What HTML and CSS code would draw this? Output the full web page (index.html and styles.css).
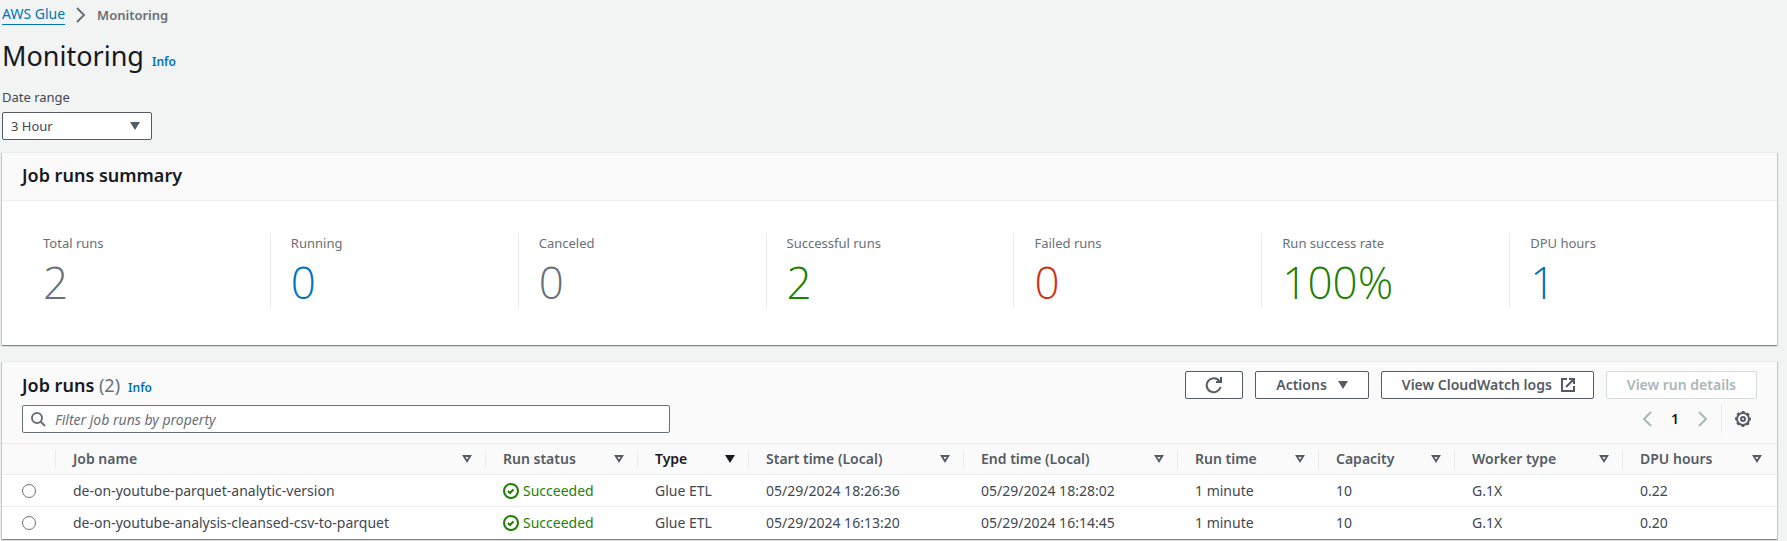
FILE: index.html
```html
<!DOCTYPE html>
<html lang="en">
<head>
<meta charset="utf-8">
<title>Monitoring - AWS Glue</title>
<link rel="stylesheet" href="styles.css">
</head>
<body>
<svg class="sprite" aria-hidden="true">
  <symbol id="sort" viewBox="0 0 16 16"><path d="M4.700 5h6.600L8 10.200z" fill="none" stroke="currentColor" stroke-width="1.800"/></symbol>
  <symbol id="caret" viewBox="0 0 16 16"><path d="M4.700 5h6.600L8 10.200z" fill="currentColor" stroke="currentColor" stroke-width="1.800"/></symbol>
  <symbol id="success" viewBox="0 0 16 16"><circle cx="8" cy="8" r="7" fill="none" stroke="currentColor" stroke-width="2"/><path d="M5 8l2 2 3.500-3.500" fill="none" stroke="currentColor" stroke-width="2"/></symbol>
  <symbol id="chevron" viewBox="0 0 16 16"><path d="M4 1l7 7-7 7" fill="none" stroke="currentColor" stroke-width="2"/></symbol>
</svg>
<main class="page">
  <nav class="breadcrumb" aria-label="Breadcrumb">
    <a class="crumb-link" href="#glue">AWS Glue</a>
    <svg class="icon"><use href="#chevron"/></svg>
    <span class="crumb-current">Monitoring</span>
  </nav>
  <header class="title-row">
    <h1 class="title">Monitoring</h1>
    <a class="info" href="#info">Info</a>
  </header>
  <div class="field">
    <label class="field-label" for="range">Date range</label>
    <div class="select-wrap">
      <select class="select" id="range"><option>3 Hour</option></select>
      <svg class="icon select-caret"><use href="#caret"/></svg>
    </div>
  </div>

  <section class="panel summary">
    <header class="summary-head"><h2 class="heading">Job runs summary</h2></header>
    <dl class="stats">
      <div class="stat"><dt>Total runs</dt><dd>2</dd></div>
      <div class="stat"><dt>Running</dt><dd class="blue">0</dd></div>
      <div class="stat"><dt>Canceled</dt><dd>0</dd></div>
      <div class="stat"><dt>Successful runs</dt><dd class="green">2</dd></div>
      <div class="stat"><dt>Failed runs</dt><dd class="red">0</dd></div>
      <div class="stat"><dt>Run success rate</dt><dd class="green">100%</dd></div>
      <div class="stat"><dt>DPU hours</dt><dd class="blue">1</dd></div>
    </dl>
  </section>

  <section class="panel">
    <header class="runs-head">
      <div class="bar">
        <div class="runs-title">
          <h2 class="heading">Job runs <span class="count">(2)</span></h2>
          <a class="info" href="#runs-info">Info</a>
        </div>
        <div class="actions">
          <button class="btn" type="button" aria-label="Refresh"><svg class="icon" viewBox="0 0 16 16"><path d="M14.500 10A7 7 0 1 1 13.500 4.300M15 0v5H10" fill="none" stroke="currentColor" stroke-width="2"/></svg></button>
          <button class="btn btn-trailing" type="button">Actions <svg class="icon"><use href="#caret"/></svg></button>
          <button class="btn btn-trailing" type="button">View CloudWatch logs <svg class="icon" viewBox="0 0 16 16"><path d="M7 2H2v12h12V9M9 2h5v5M14 2L6 10" fill="none" stroke="currentColor" stroke-width="2"/></svg></button>
          <button class="btn" type="button" disabled>View run details</button>
        </div>
      </div>
      <div class="bar">
        <div class="search">
          <svg class="icon search-icon" viewBox="0 0 16 16"><circle cx="7" cy="7" r="5" fill="none" stroke="currentColor" stroke-width="2"/><path d="M10.500 10.500L15 15" stroke="currentColor" stroke-width="2"/></svg>
          <input class="search-input" type="text" placeholder="Filter job runs by property" aria-label="Filter job runs">
        </div>
        <div class="pager">
          <button class="icon-btn" type="button" disabled aria-label="Previous page"><svg class="icon flip"><use href="#chevron"/></svg></button>
          <button class="icon-btn page-no" type="button">1</button>
          <button class="icon-btn" type="button" disabled aria-label="Next page"><svg class="icon"><use href="#chevron"/></svg></button>
          <span class="rule"></span>
          <button class="icon-btn" type="button" aria-label="Preferences"><svg class="icon" viewBox="0 0 16 16" fill="none" stroke="currentColor" stroke-width="2"><circle cx="8" cy="8" r="6"/><circle cx="8" cy="8" r="7" stroke-dasharray="2.750 2.748" stroke-dashoffset="1.370"/><circle cx="8" cy="8" r="2"/></svg></button>
        </div>
      </div>
    </header>
    <table class="table">
      <colgroup><col class="c-pick"><col><col class="c-status"><col class="c-type"><col class="c-start"><col class="c-end"><col class="c-time"><col class="c-cap"><col class="c-worker"><col class="c-dpu"></colgroup>
      <thead>
        <tr>
          <th aria-label="Select"><div class="th"></div></th>
          <th><div class="th">Job name<svg class="icon"><use href="#sort"/></svg></div></th>
          <th><div class="th">Run status<svg class="icon"><use href="#sort"/></svg></div></th>
          <th><div class="th sorted">Type<svg class="icon"><use href="#caret"/></svg></div></th>
          <th><div class="th">Start time (Local)<svg class="icon"><use href="#sort"/></svg></div></th>
          <th><div class="th">End time (Local)<svg class="icon"><use href="#sort"/></svg></div></th>
          <th><div class="th">Run time<svg class="icon"><use href="#sort"/></svg></div></th>
          <th><div class="th">Capacity<svg class="icon"><use href="#sort"/></svg></div></th>
          <th><div class="th">Worker type<svg class="icon"><use href="#sort"/></svg></div></th>
          <th><div class="th">DPU hours<svg class="icon"><use href="#sort"/></svg></div></th>
        </tr>
      </thead>
      <tbody>
        <tr>
          <td class="pick"><input class="radio" type="radio" name="run" aria-label="Select de-on-youtube-parquet-analytic-version"></td>
          <td>de-on-youtube-parquet-analytic-version</td>
          <td><span class="status"><svg class="icon"><use href="#success"/></svg>Succeeded</span></td>
          <td>Glue ETL</td><td>05/29/2024 18:26:36</td><td>05/29/2024 18:28:02</td><td>1 minute</td><td>10</td><td>G.1X</td><td>0.22</td>
        </tr>
        <tr>
          <td class="pick"><input class="radio" type="radio" name="run" aria-label="Select de-on-youtube-analysis-cleansed-csv-to-parquet"></td>
          <td>de-on-youtube-analysis-cleansed-csv-to-parquet</td>
          <td><span class="status"><svg class="icon"><use href="#success"/></svg>Succeeded</span></td>
          <td>Glue ETL</td><td>05/29/2024 16:13:20</td><td>05/29/2024 16:14:45</td><td>1 minute</td><td>10</td><td>G.1X</td><td>0.20</td>
        </tr>
      </tbody>
    </table>
  </section>
</main>
</body>
</html>
```
FILE: styles.css
```css
* { box-sizing: border-box; }
body {
  margin: 0;
  background: #f2f3f3;
  color: #414750;
  font-family: "Noto Sans", "Open Sans", sans-serif;
  font-size: 14px;
  line-height: 20px;
}
button, input, select { font: inherit; color: inherit; }
h1, h2, dl, dd { margin: 0; font-weight: 400; }
.sprite { display: none; }
.icon { display: block; flex: none; width: 16px; height: 16px; overflow: visible; }
.page { padding: 4px 10px 2px 2px; }

.breadcrumb { display: flex; align-items: center; gap: 8px; color: #687078; }
.crumb-link { color: #0073bb; text-decoration: none; border-bottom: 1px solid #0073bb; }
.crumb-current { font-size: 13px; font-weight: 600; }

.title-row { display: flex; align-items: baseline; gap: 8px; margin-top: 13px; }
.title { color: #16191f; font-size: 27px; line-height: 36px; }
.info { color: #0073bb; font-size: 12px; font-weight: 600; text-decoration: none; }
.field { margin-top: 13px; font-size: 13px; }
.field-label { display: block; margin-bottom: 5px; }
.select-wrap { position: relative; width: 150px; }
.select {
  appearance: none;
  display: block;
  width: 100%;
  height: 28px;
  padding: 0 8px;
  border: 1px solid #545b64;
  border-radius: 2px;
  background: #fff;
}
.select-caret { position: absolute; right: 9px; top: 6px; color: #545b64; pointer-events: none; }

.panel {
  background: #fff;
  border-top: 1px solid #eaeded;
  box-shadow: 0 1px 1px 0 rgba(0, 28, 36, .3), 1px 1px 1px 0 rgba(0, 28, 36, .15), -1px 1px 1px 0 rgba(0, 28, 36, .15);
}
.summary { margin: 12px 0 16px; }
.summary-head { padding: 10px 20px 13px; background: #fafafa; border-bottom: 1px solid #eaeded; }
.heading { color: #16191f; font-size: 18px; font-weight: 600; line-height: 24px; }
.count { color: #687078; font-weight: 400; }
.stats { display: grid; grid-template-columns: repeat(7, 1fr); padding: 32px 20px 36px; color: #687078; font-size: 13px; }
.stat { padding: 0 20px; border-left: 1px solid #eaeded; }
.stat:first-child { border-color: transparent; }
.stat dd { padding-top: 2px; font-family: "Open Sans", "Noto Sans", sans-serif; font-size: 44px; font-weight: 300; line-height: 54px; }
.stat .blue { color: #0073bb; }
.stat .green { color: #1d8102; }
.stat .red { color: #d13212; }

.runs-head { display: grid; gap: 6px; padding: 9px 20px 10px; background: #fafafa; border-bottom: 1px solid #eaeded; }
.bar { display: flex; align-items: center; justify-content: space-between; }
.runs-title { display: flex; align-items: baseline; gap: 8px; }
.actions { display: flex; gap: 12px; }
.btn {
  display: flex;
  align-items: center;
  gap: 8px;
  height: 28px;
  padding: 0 20px;
  border: 1px solid #545b64;
  border-radius: 2px;
  background: #fff;
  color: #545b64;
  font-weight: 600;
}
.btn-trailing { padding-right: 17px; }
.btn:disabled { border-color: #d5dbdb; color: #aab7b8; }
.search { position: relative; width: 648px; }
.search-icon { position: absolute; left: 8px; top: 6px; color: #687078; }
.search-input { display: block; width: 100%; height: 28px; padding: 0 8px 0 32px; border: 1px solid #687078; border-radius: 2px; background: #fff; }
.search-input::placeholder { color: #687078; font-style: italic; opacity: 1; }
.pager { display: flex; align-items: center; }
.icon-btn { display: flex; align-items: center; justify-content: center; width: 28px; height: 28px; padding: 0; border: 0; background: none; color: #545b64; }
.icon-btn:disabled { color: #aab7b8; }
.page-no { color: #16191f; font-weight: 600; }
.flip { transform: scaleX(-1); }
.rule { width: 1px; height: 28px; margin: 0 7px 0 4px; background: #eaeded; }

.table { width: 100%; table-layout: fixed; border-collapse: separate; border-spacing: 0; }
.c-pick { width: 54px; }
.c-status { width: 152px; }
.c-type { width: 111px; }
.c-start { width: 215px; }
.c-end { width: 214px; }
.c-time { width: 141px; }
.c-cap { width: 136px; }
.c-worker { width: 168px; }
.c-dpu { width: 154px; }
th { height: 31px; padding: 0; background: #fafafa; border-bottom: 1px solid #eaeded; color: #545b64; font-weight: 600; text-align: left; }
.th { display: flex; align-items: center; justify-content: space-between; height: 20px; padding: 0 10px 0 17px; border-right: 1px solid #eaeded; white-space: nowrap; }
th:last-child .th { border-right: 0; padding-right: 12px; }
.sorted { color: #16191f; }
td { height: 32px; padding: 0 0 0 17px; border-bottom: 1px solid #eaeded; white-space: nowrap; }
tr:last-child td { border-bottom: 0; }
td.pick { padding-left: 20px; }
.radio { appearance: none; display: block; width: 14px; height: 14px; margin: 0; border: 1px solid #687078; border-radius: 50%; background: #fff; }
.status { display: flex; align-items: center; gap: 4px; color: #1d8102; }
```
